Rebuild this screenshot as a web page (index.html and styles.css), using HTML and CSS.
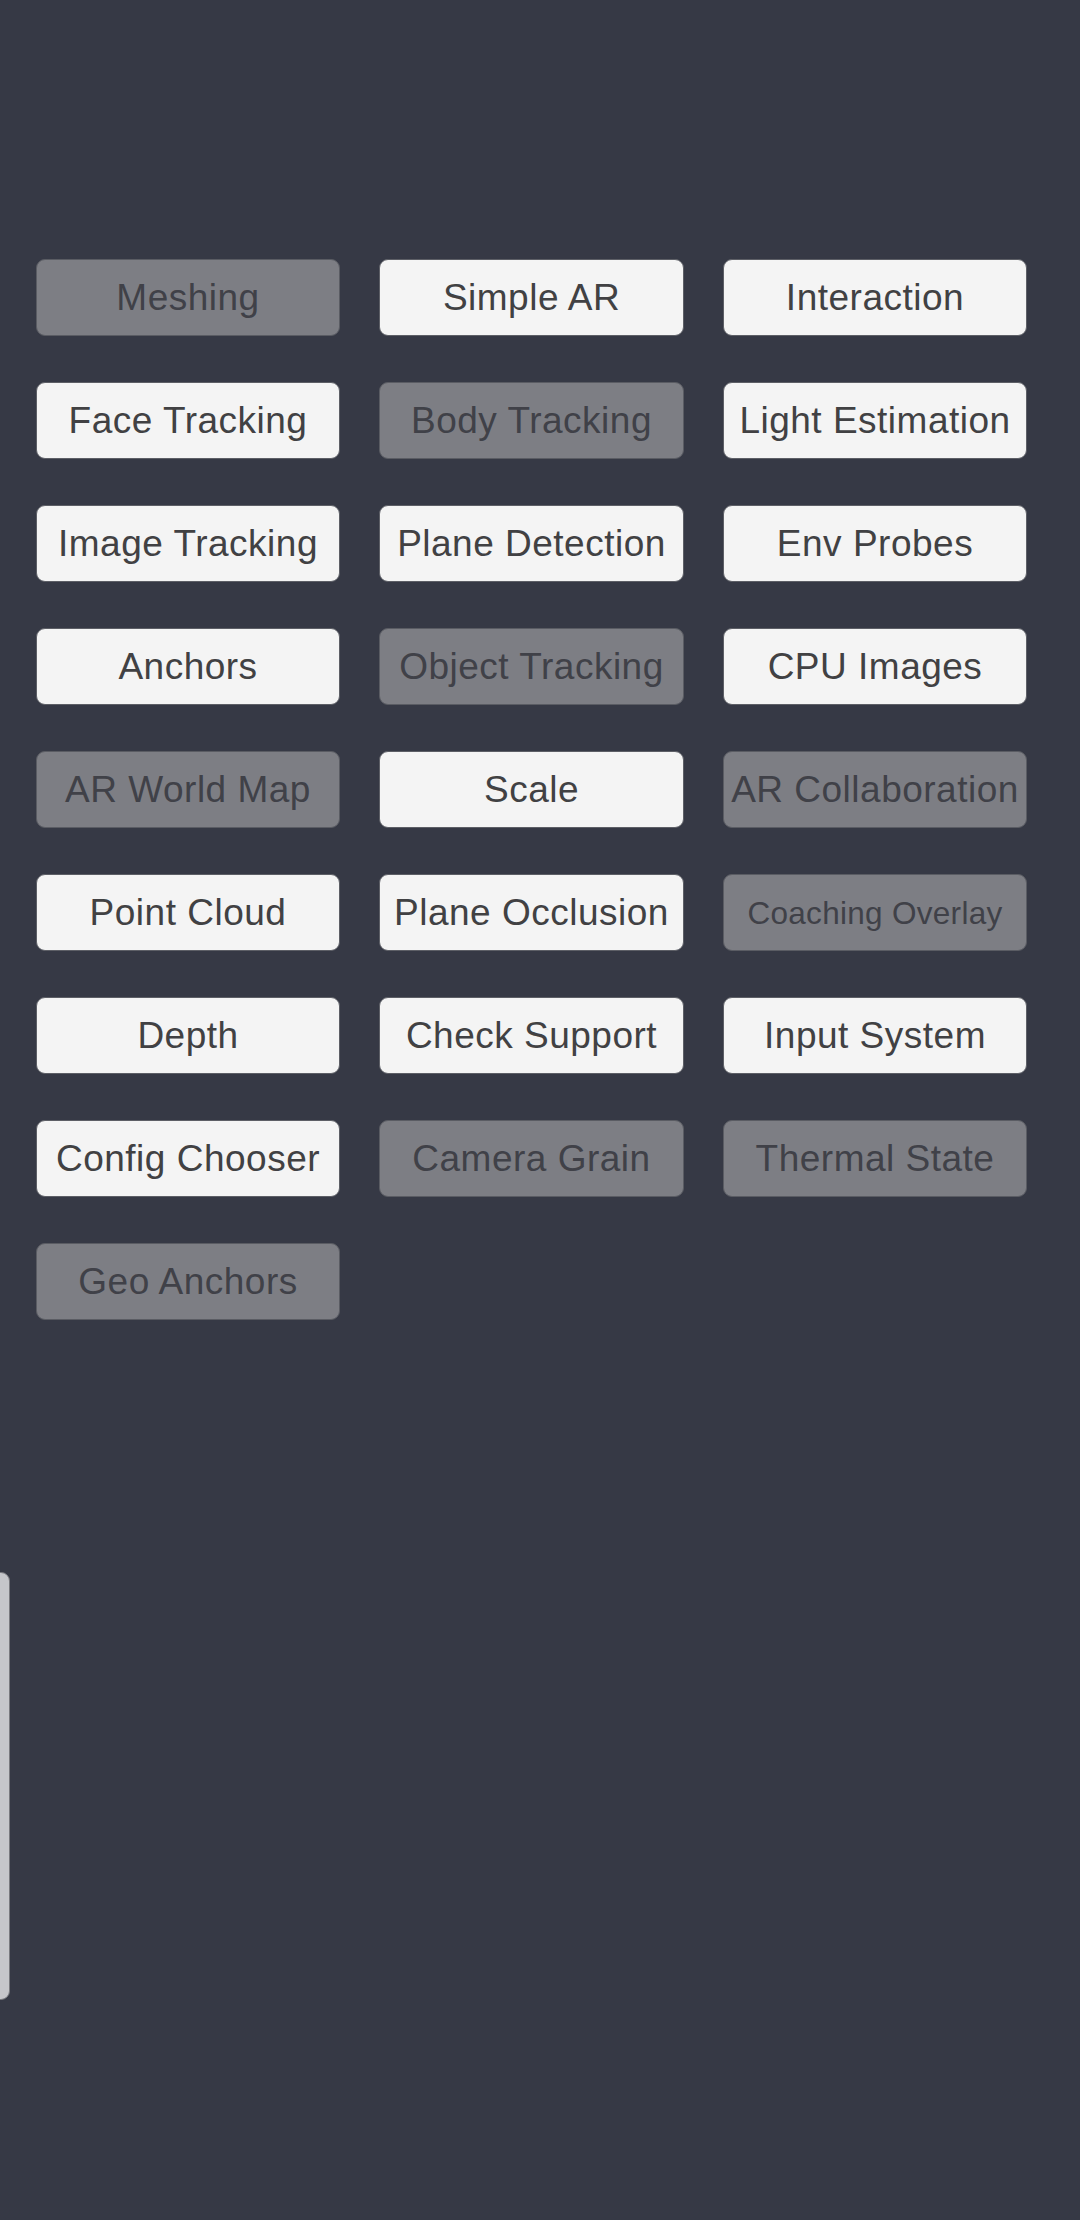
FILE: index.html
```html
<!DOCTYPE html>
<html>
<head>
<meta charset="utf-8">
<link rel="stylesheet" href="styles.css">
</head>
<body>
<div class="screen">
  <div class="grid">
    <div class="btn off">Meshing</div>
    <div class="btn">Simple AR</div>
    <div class="btn">Interaction</div>
    <div class="btn">Face Tracking</div>
    <div class="btn off">Body Tracking</div>
    <div class="btn">Light Estimation</div>
    <div class="btn">Image Tracking</div>
    <div class="btn">Plane Detection</div>
    <div class="btn">Env Probes</div>
    <div class="btn">Anchors</div>
    <div class="btn off">Object Tracking</div>
    <div class="btn">CPU Images</div>
    <div class="btn off">AR World Map</div>
    <div class="btn">Scale</div>
    <div class="btn off">AR Collaboration</div>
    <div class="btn">Point Cloud</div>
    <div class="btn">Plane Occlusion</div>
    <div class="btn off small">Coaching Overlay</div>
    <div class="btn">Depth</div>
    <div class="btn">Check Support</div>
    <div class="btn">Input System</div>
    <div class="btn">Config Chooser</div>
    <div class="btn off">Camera Grain</div>
    <div class="btn off">Thermal State</div>
    <div class="btn off">Geo Anchors</div>
  </div>
  <div class="drawer"></div>
</div>
</body>
</html>
```

FILE: styles.css
```css
html, body {
  margin: 0;
  padding: 0;
  background: #363945;
}
.screen {
  position: relative;
  width: 1080px;
  height: 2220px;
  overflow: hidden;
  background: #363945;
  font-family: "Liberation Sans", Arial, sans-serif;
}
.grid {
  display: grid;
  grid-template-columns: 304px 305px 304px;
  grid-auto-rows: 77px;
  column-gap: 39px;
  row-gap: 46px;
  padding: 259px 0 0 36px;
}
.btn {
  box-sizing: border-box;
  display: flex;
  align-items: center;
  justify-content: center;
  background: #f4f4f4;
  color: #414143;
  border: 1px solid #5d5f66;
  border-radius: 9px;
  font-size: 37px;
  letter-spacing: 0.5px;
  white-space: nowrap;
  padding-top: 1px;
}
.btn.off {
  background: #7d7e84;
  color: #404148;
  border-color: #5a5c63;
}
.btn.small {
  font-size: 31.5px;
  letter-spacing: 0.3px;
}
.drawer {
  position: absolute;
  left: -20px;
  top: 1572px;
  width: 30px;
  height: 428px;
  box-sizing: border-box;
  background: #c5c6ca;
  border: 1px solid #78797e;
  border-radius: 9px;
}
```
